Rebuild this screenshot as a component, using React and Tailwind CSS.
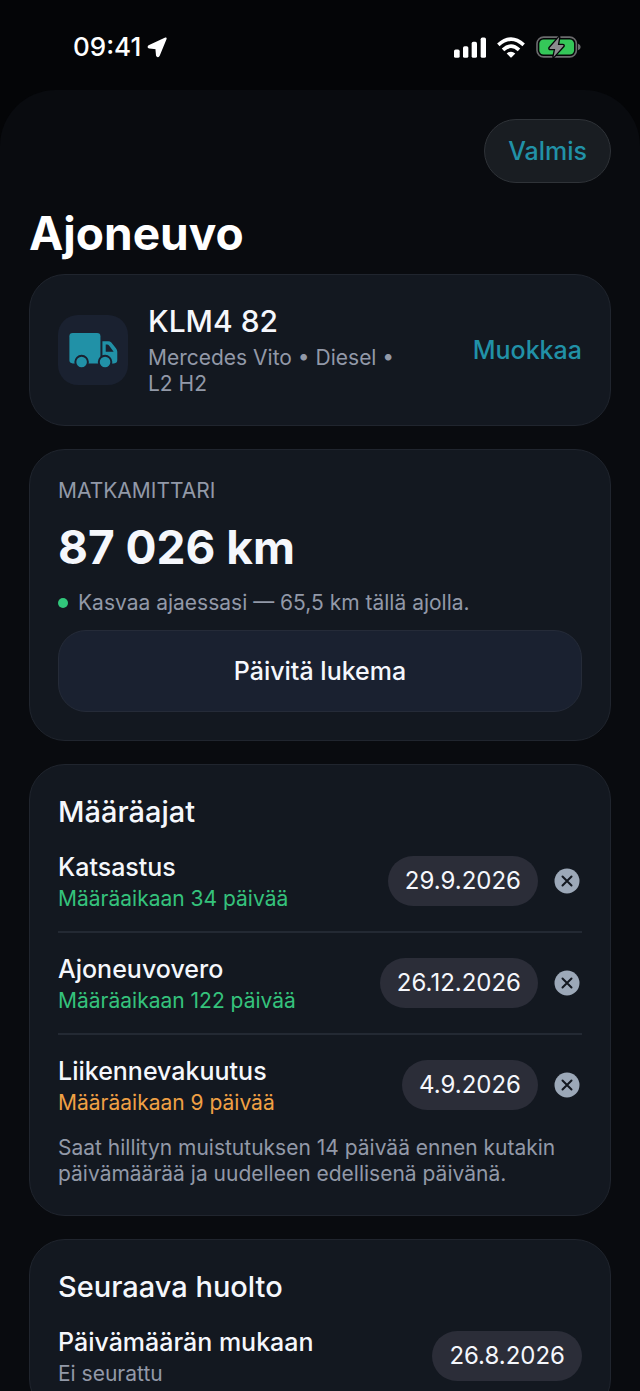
import { useState } from "react";

const deadlines = [
  { id: "inspection", title: "Katsastus", days: 34, date: "29.9.2026" },
  { id: "tax", title: "Ajoneuvovero", days: 122, date: "26.12.2026" },
  { id: "insurance", title: "Liikennevakuutus", days: 9, date: "4.9.2026" },
];

const LocationArrow = () => (
  <svg viewBox="0 0 60 62" className="h-[21px] w-5" aria-hidden="true">
    <path
      d="M56 4 6 27 Q3 30 7 31 L28 33 L30 55 Q32 60 35 55 Z"
      fill="#fff"
      stroke="#fff"
      strokeWidth="6"
      strokeLinejoin="round"
    />
  </svg>
);

const SignalIcon = () => (
  <svg viewBox="0 0 96 62" className="h-[21px] w-8" aria-hidden="true">
    <g fill="#fff">
      <rect x="0" y="37" width="17" height="25" rx="5" />
      <rect x="27" y="27" width="16" height="35" rx="5" />
      <rect x="53" y="14" width="16" height="48" rx="5" />
      <rect x="80" y="1" width="16" height="61" rx="5" />
    </g>
  </svg>
);

const WifiIcon = () => (
  <svg viewBox="0 0 84 62" className="h-[21px] w-7" aria-hidden="true">
    <g fill="none" stroke="#fff" strokeWidth="11">
      <path d="M4 23 Q42 -11 80 23" />
      <path d="M18 38 Q42 16 66 38" />
    </g>
    <path d="M29 49 Q42 38 55 49 L44 60 Q42 62 40 60 Z" fill="#fff" />
  </svg>
);

const BatteryIcon = () => (
  <svg viewBox="0 0 136 66" className="h-[22px] w-[45px]" aria-hidden="true">
    <rect
      x="3"
      y="3"
      width="119"
      height="60"
      rx="20"
      fill="none"
      stroke="#6b6b6d"
      strokeWidth="5"
    />
    <rect x="10" y="10" width="105" height="46" rx="13" fill="#35c759" />
    <path d="M127 23 Q135 26 135 33 Q135 40 127 43 Z" fill="#6b6b6d" />
    <path
      d="M70 3 41 36 Q40 39 43 39 L58 39 53 63 83 30 Q84 27 81 27 L66 27 Z"
      fill="#8b8b8e"
      stroke="#050608"
      strokeWidth="8"
      strokeLinejoin="round"
      paintOrder="stroke"
    />
  </svg>
);

const TruckIcon = () => (
  <svg viewBox="0 0 146 106" className="h-[35px] w-[49px]" aria-hidden="true">
    <path
      d="M10 0 H84 Q94 0 94 10 V92 H10 Q0 92 0 82 V10 Q0 0 10 0 Z"
      fill="#2191a7"
    />
    <path
      d="M100 25 H118 Q123 25 127 29 L141 46 Q145 51 145 57 V82 Q145 92 135 92 H94 V82 H100 Z"
      fill="#2191a7"
    />
    <path d="M110 35 V57 H134 L120 38 Q118 35 114 35 Z" fill="#1a2130" />
    <g fill="#2191a7" stroke="#1a2130" strokeWidth="6">
      <circle cx="37" cy="88" r="19" />
      <circle cx="108" cy="88" r="19" />
    </g>
  </svg>
);

const ClearIcon = () => (
  <svg viewBox="0 0 26 26" className="size-[26px]" aria-hidden="true">
    <circle cx="13" cy="13" r="12.500" fill="#9ca8b8" />
    <path
      d="M8.500 8.500 17.500 17.500 M17.500 8.500 8.500 17.500"
      stroke="#131820"
      strokeWidth="2"
      strokeLinecap="round"
    />
  </svg>
);

const Card = ({ children }) => (
  <section className="shrink-0 rounded-[36px] border border-[#20252e] bg-[#131820] p-7">
    {children}
  </section>
);

const DateButton = ({ label, date }) => (
  <button
    aria-label={`${label}: ${date}`}
    className="h-[50px] rounded-full bg-[#2b2d38] px-[17px] text-[24px] leading-8 text-[#f5f7fc]"
  >
    {date}
  </button>
);

const Row = ({ title, note, noteClass, children }) => (
  <div className="flex items-center justify-between">
    <div className="flex flex-col gap-1">
      <h3 className="text-[25px] leading-8 font-medium">{title}</h3>
      <p className={`text-[21px] leading-6 ${noteClass}`}>{note}</p>
    </div>
    <div className="flex items-center gap-4">{children}</div>
  </div>
);

const App = () => {
  const [items, setItems] = useState(deadlines);

  const clearItem = (id) => {
    setItems(items.filter((item) => item.id !== id));
  };

  return (
    <div className="flex h-screen flex-col overflow-hidden bg-[#040507] font-['Inter',sans-serif] text-[#f5f7fc]">
      {/* Status bar */}
      <header className="flex h-[90px] shrink-0 items-center justify-between pt-1 pr-[59px] pl-[73px]">
        <div className="flex items-center gap-1.5 text-white">
          <span className="text-[26px] leading-8 font-medium">09:41</span>
          <LocationArrow />
        </div>
        <div className="flex items-center gap-[11px]">
          <SignalIcon />
          <WifiIcon />
          <BatteryIcon />
        </div>
      </header>

      {/* Sheet */}
      <main className="flex flex-1 flex-col overflow-hidden rounded-t-[56px] bg-[#090b0f] px-[29px] pt-[29px]">
        <div className="flex shrink-0 justify-end">
          <button className="h-16 rounded-full border border-[#2f3338] bg-[#191d22] px-[23px] text-[25px] leading-8 font-medium text-[#2191a7]">
            Valmis
          </button>
        </div>
        <h1 className="mt-5 mb-[11px] text-[46px] leading-[60px] font-bold text-white">
          Ajoneuvo
        </h1>

        <div className="flex flex-col gap-[23px]">
          <Card>
            <div className="flex items-center gap-5">
              <div className="flex size-[70px] shrink-0 items-center justify-center rounded-[20px] bg-[#1a2130]">
                <TruckIcon />
              </div>
              <div className="flex flex-1 flex-col gap-1.5">
                <h2 className="text-[30px] leading-9 font-medium">KLM4 82</h2>
                <p className="max-w-[260px] text-[21px] leading-[26px] text-[#9299a8]">
                  Mercedes Vito • Diesel • L2 H2
                </p>
              </div>
              <button className="text-[25px] leading-8 font-medium text-[#2191a7]">
                Muokkaa
              </button>
            </div>
          </Card>

          <Card>
            <div className="flex flex-col gap-[14px]">
              <h2 className="text-[21px] leading-[26px] text-[#9299a8]">
                MATKAMITTARI
              </h2>
              <p className="text-[46px] leading-[58px] font-bold">87 026 km</p>
              <p className="flex items-center gap-2.5 text-[21px] leading-[26px] text-[#9299a8]">
                <span className="size-2.5 rounded-full bg-[#31c77b]" />
                Kasvaa ajaessasi — 65,5 km tällä ajolla.
              </p>
              <button className="h-[82px] rounded-[28px] border border-[#252b38] bg-[#1a2130] text-[25px] leading-8 font-medium">
                Päivitä lukema
              </button>
            </div>
          </Card>

          <Card>
            <div className="flex flex-col gap-5">
              <h2 className="text-[29px] leading-[38px] font-medium">
                Määräajat
              </h2>
              {items.map((item, index) => (
                <div key={item.id} className="flex flex-col gap-5">
                  {index > 0 && <hr className="border-t-2 border-[#232933]" />}
                  <Row
                    title={item.title}
                    note={`Määräaikaan ${item.days} päivää`}
                    noteClass={
                      item.days <= 14 ? "text-[#f0a044]" : "text-[#35c27c]"
                    }
                  >
                    <DateButton label={item.title} date={item.date} />
                    <button
                      aria-label={`Poista ${item.title}`}
                      className="pr-0.5"
                      onClick={() => clearItem(item.id)}
                    >
                      <ClearIcon />
                    </button>
                  </Row>
                </div>
              ))}
              <p className="text-[21px] leading-[26px] text-[#9299a8]">
                Saat hillityn muistutuksen 14 päivää ennen kutakin päivämäärää
                ja uudelleen edellisenä päivänä.
              </p>
            </div>
          </Card>

          <Card>
            <div className="flex flex-col gap-5">
              <h2 className="text-[29px] leading-[38px] font-medium">
                Seuraava huolto
              </h2>
              <Row
                title="Päivämäärän mukaan"
                note="Ei seurattu"
                noteClass="text-[#9299a8]"
              >
                <DateButton label="Päivämäärän mukaan" date="26.8.2026" />
              </Row>
            </div>
          </Card>
        </div>
      </main>
    </div>
  );
};

export default App;
